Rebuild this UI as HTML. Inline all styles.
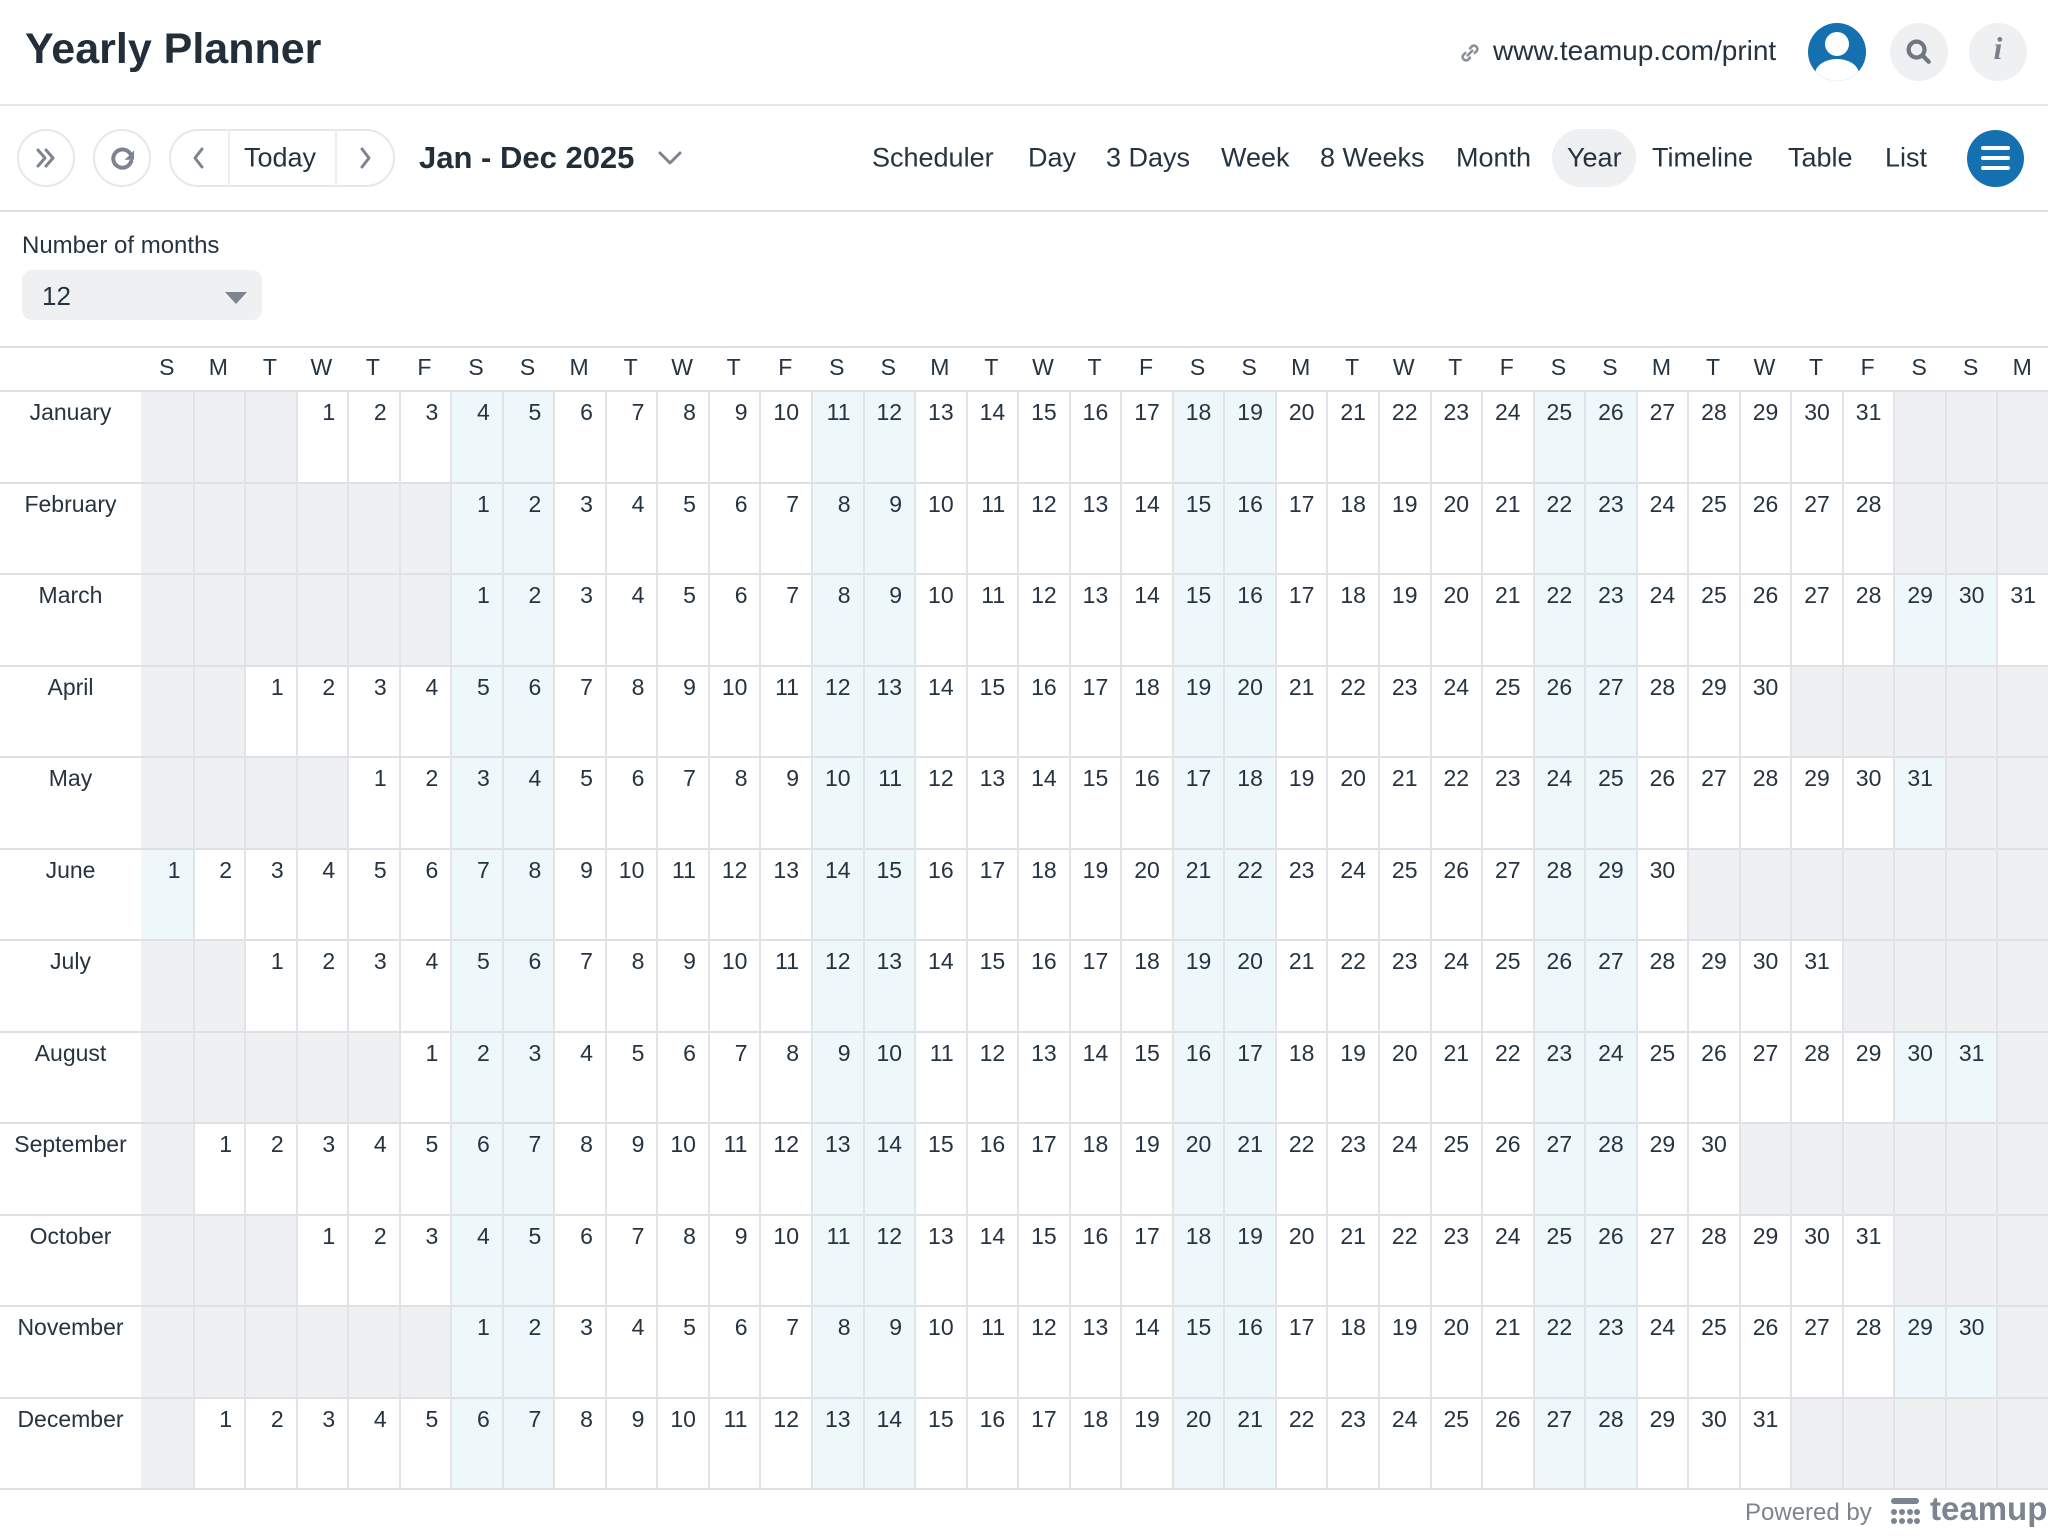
<!DOCTYPE html>
<html><head><meta charset="utf-8"><style>
*{box-sizing:border-box;margin:0;padding:0}
body{width:2048px;height:1536px;background:#fff;font-family:"Liberation Sans",sans-serif;color:#263341;position:relative;overflow:hidden}
.a{position:absolute}
.hl{position:absolute;left:0;width:2048px;height:2px;background:#e6e7ea}
.cb{position:absolute;border:2px solid #e6e7ec;border-radius:50%;width:58px;height:58px;top:129px}
.tab{position:absolute;top:158px;transform:translateY(-50%);font-size:27px;color:#263341}
.g{position:absolute;left:0;top:346px;width:2048px;display:grid;grid-template-columns:141px repeat(37,1fr);border-top:2px solid #e0e1e4}
.g>div{border-bottom:2px solid #dfe0e3;height:91.5px;font-size:23px;text-align:right;padding:7px 12px 0 0;border-left:2px solid #e2e3e6;background:#fff}
.g>div.l{border-left:none;text-align:center;padding:7px 0 0 0;font-size:23px}
.g>div.e{background:#eff0f2}
.g>div.w{background:#eef7fa}
.g>div.h{height:44px;text-align:center;padding:6px 0 0 0;border-left:none;font-size:23px;background:#fff}
.g>div.c1{border-left:none}
</style></head><body>
<div class="a" style="left:25px;top:25px;font-size:43px;font-weight:bold;color:#222f3b">Yearly Planner</div>
<svg class="a" style="left:1456px;top:39px" width="28" height="28" viewBox="0 0 24 24" fill="none" stroke="#8a919b" stroke-width="2.2" stroke-linecap="round"><path d="M10 14l4-4M8 12l-2 2a3 3 0 0 0 4 4l2-2M16 12l2-2a3 3 0 0 0-4-4l-2 2"/></svg>
<div class="a" style="left:1493px;top:35px;font-size:28px;color:#263341">www.teamup.com/print</div>
<div class="a" style="left:1808px;top:23px;width:58px;height:58px;border-radius:50%;background:#1570b0;overflow:hidden">
<div class="a" style="left:17px;top:9px;width:24px;height:24px;border-radius:50%;background:#fff"></div>
<div class="a" style="left:7px;top:36px;width:44px;height:30px;border-radius:50% 50% 0 0;background:#fff"></div></div>
<div class="a" style="left:1890px;top:23px;width:58px;height:58px;border-radius:50%;background:#eff0f2"></div>
<svg class="a" style="left:1902px;top:35px" width="34" height="34" viewBox="0 0 28 28" fill="none" stroke="#6f7782" stroke-width="3.5" stroke-linecap="round"><circle cx="12" cy="12" r="6.5"/><path d="M17 17l5 5"/></svg>
<div class="a" style="left:1969px;top:23px;width:58px;height:58px;border-radius:50%;background:#eff0f2"></div>
<div class="a" style="left:1969px;top:30px;width:58px;text-align:center;font-family:'Liberation Serif',serif;font-style:italic;font-weight:bold;font-size:32px;color:#7a818b">i</div>
<div class="hl" style="top:104px"></div>

<div class="cb" style="left:17px"></div>
<svg class="a" style="left:33px;top:145px" width="26" height="26" viewBox="0 0 26 26" fill="none" stroke="#7c8490" stroke-width="3" stroke-linecap="round" stroke-linejoin="round"><path d="M5 5l7 8-7 8M13 5l7 8-7 8"/></svg>
<div class="cb" style="left:93px"></div>
<svg class="a" style="left:106px;top:142px" width="32" height="32" viewBox="0 0 28 28" fill="none" stroke="#7c8490" stroke-width="3.5" stroke-linecap="round"><path d="M21 10A8 8 0 1 0 22 17"/><path d="M17 15h7v-7" fill="#7c8490" stroke-width="1"/></svg>
<div class="a" style="left:169px;top:129px;width:226px;height:58px;border:2px solid #e6e7ec;border-radius:29px"></div>
<div class="a" style="left:228px;top:129px;width:2px;height:58px;background:#eceef1"></div>
<div class="a" style="left:335px;top:129px;width:2px;height:58px;background:#eceef1"></div>
<svg class="a" style="left:186px;top:145px" width="26" height="26" viewBox="0 0 26 26" fill="none" stroke="#7c8490" stroke-width="3" stroke-linecap="round" stroke-linejoin="round"><path d="M16 4l-7 9 7 9"/></svg>
<svg class="a" style="left:352px;top:145px" width="26" height="26" viewBox="0 0 26 26" fill="none" stroke="#7c8490" stroke-width="3" stroke-linecap="round" stroke-linejoin="round"><path d="M10 4l7 9-7 9"/></svg>
<div class="tab" style="left:244px">Today</div>
<div class="tab" style="left:419px;font-weight:bold;font-size:31px;color:#222f3b">Jan - Dec 2025</div>
<svg class="a" style="left:656px;top:147px" width="28" height="22" viewBox="0 0 28 22" fill="none" stroke="#7c8490" stroke-width="3" stroke-linecap="round" stroke-linejoin="round"><path d="M4 6l10 10 10-10"/></svg>
<div class="tab" style="left:872px">Scheduler</div>
<div class="tab" style="left:1028px">Day</div>
<div class="tab" style="left:1106px">3 Days</div>
<div class="tab" style="left:1221px">Week</div>
<div class="tab" style="left:1320px">8 Weeks</div>
<div class="tab" style="left:1456px">Month</div>
<div class="a" style="left:1552px;top:129px;width:84px;height:58px;border-radius:29px;background:#eff0f2"></div>
<div class="tab" style="left:1567px">Year</div>
<div class="tab" style="left:1652px">Timeline</div>
<div class="tab" style="left:1788px">Table</div>
<div class="tab" style="left:1885px">List</div>
<div class="a" style="left:1967px;top:130px;width:57px;height:57px;border-radius:50%;background:#1570b0"></div>
<div class="a" style="left:1981px;top:146px;width:29px;height:4px;border-radius:2px;background:#fff"></div>
<div class="a" style="left:1981px;top:156px;width:29px;height:4px;border-radius:2px;background:#fff"></div>
<div class="a" style="left:1981px;top:166px;width:29px;height:4px;border-radius:2px;background:#fff"></div>
<div class="hl" style="top:210px;background:#e0e1e4"></div>

<div class="a" style="left:22px;top:232px;font-size:24px">Number of months</div>
<div class="a" style="left:22px;top:270px;width:240px;height:50px;border-radius:10px;background:#eff0f2"></div>
<div class="a" style="left:42px;top:281px;font-size:26px">12</div>
<div class="a" style="left:225px;top:292px;width:0;height:0;border-left:11px solid transparent;border-right:11px solid transparent;border-top:12px solid #7c8490"></div>

<div class="g">
<div class="h"></div><div class="h">S</div><div class="h">M</div><div class="h">T</div><div class="h">W</div><div class="h">T</div><div class="h">F</div><div class="h">S</div><div class="h">S</div><div class="h">M</div><div class="h">T</div><div class="h">W</div><div class="h">T</div><div class="h">F</div><div class="h">S</div><div class="h">S</div><div class="h">M</div><div class="h">T</div><div class="h">W</div><div class="h">T</div><div class="h">F</div><div class="h">S</div><div class="h">S</div><div class="h">M</div><div class="h">T</div><div class="h">W</div><div class="h">T</div><div class="h">F</div><div class="h">S</div><div class="h">S</div><div class="h">M</div><div class="h">T</div><div class="h">W</div><div class="h">T</div><div class="h">F</div><div class="h">S</div><div class="h">S</div><div class="h">M</div>

<div class="l">January</div><div class="e c1"></div><div class="e"></div><div class="e"></div><div>1</div><div>2</div><div>3</div><div class="w">4</div><div class="w">5</div><div>6</div><div>7</div><div>8</div><div>9</div><div>10</div><div class="w">11</div><div class="w">12</div><div>13</div><div>14</div><div>15</div><div>16</div><div>17</div><div class="w">18</div><div class="w">19</div><div>20</div><div>21</div><div>22</div><div>23</div><div>24</div><div class="w">25</div><div class="w">26</div><div>27</div><div>28</div><div>29</div><div>30</div><div>31</div><div class="e"></div><div class="e"></div><div class="e"></div>

<div class="l">February</div><div class="e c1"></div><div class="e"></div><div class="e"></div><div class="e"></div><div class="e"></div><div class="e"></div><div class="w">1</div><div class="w">2</div><div>3</div><div>4</div><div>5</div><div>6</div><div>7</div><div class="w">8</div><div class="w">9</div><div>10</div><div>11</div><div>12</div><div>13</div><div>14</div><div class="w">15</div><div class="w">16</div><div>17</div><div>18</div><div>19</div><div>20</div><div>21</div><div class="w">22</div><div class="w">23</div><div>24</div><div>25</div><div>26</div><div>27</div><div>28</div><div class="e"></div><div class="e"></div><div class="e"></div>

<div class="l">March</div><div class="e c1"></div><div class="e"></div><div class="e"></div><div class="e"></div><div class="e"></div><div class="e"></div><div class="w">1</div><div class="w">2</div><div>3</div><div>4</div><div>5</div><div>6</div><div>7</div><div class="w">8</div><div class="w">9</div><div>10</div><div>11</div><div>12</div><div>13</div><div>14</div><div class="w">15</div><div class="w">16</div><div>17</div><div>18</div><div>19</div><div>20</div><div>21</div><div class="w">22</div><div class="w">23</div><div>24</div><div>25</div><div>26</div><div>27</div><div>28</div><div class="w">29</div><div class="w">30</div><div>31</div>

<div class="l">April</div><div class="e c1"></div><div class="e"></div><div>1</div><div>2</div><div>3</div><div>4</div><div class="w">5</div><div class="w">6</div><div>7</div><div>8</div><div>9</div><div>10</div><div>11</div><div class="w">12</div><div class="w">13</div><div>14</div><div>15</div><div>16</div><div>17</div><div>18</div><div class="w">19</div><div class="w">20</div><div>21</div><div>22</div><div>23</div><div>24</div><div>25</div><div class="w">26</div><div class="w">27</div><div>28</div><div>29</div><div>30</div><div class="e"></div><div class="e"></div><div class="e"></div><div class="e"></div><div class="e"></div>

<div class="l">May</div><div class="e c1"></div><div class="e"></div><div class="e"></div><div class="e"></div><div>1</div><div>2</div><div class="w">3</div><div class="w">4</div><div>5</div><div>6</div><div>7</div><div>8</div><div>9</div><div class="w">10</div><div class="w">11</div><div>12</div><div>13</div><div>14</div><div>15</div><div>16</div><div class="w">17</div><div class="w">18</div><div>19</div><div>20</div><div>21</div><div>22</div><div>23</div><div class="w">24</div><div class="w">25</div><div>26</div><div>27</div><div>28</div><div>29</div><div>30</div><div class="w">31</div><div class="e"></div><div class="e"></div>

<div class="l">June</div><div class="w c1">1</div><div>2</div><div>3</div><div>4</div><div>5</div><div>6</div><div class="w">7</div><div class="w">8</div><div>9</div><div>10</div><div>11</div><div>12</div><div>13</div><div class="w">14</div><div class="w">15</div><div>16</div><div>17</div><div>18</div><div>19</div><div>20</div><div class="w">21</div><div class="w">22</div><div>23</div><div>24</div><div>25</div><div>26</div><div>27</div><div class="w">28</div><div class="w">29</div><div>30</div><div class="e"></div><div class="e"></div><div class="e"></div><div class="e"></div><div class="e"></div><div class="e"></div><div class="e"></div>

<div class="l">July</div><div class="e c1"></div><div class="e"></div><div>1</div><div>2</div><div>3</div><div>4</div><div class="w">5</div><div class="w">6</div><div>7</div><div>8</div><div>9</div><div>10</div><div>11</div><div class="w">12</div><div class="w">13</div><div>14</div><div>15</div><div>16</div><div>17</div><div>18</div><div class="w">19</div><div class="w">20</div><div>21</div><div>22</div><div>23</div><div>24</div><div>25</div><div class="w">26</div><div class="w">27</div><div>28</div><div>29</div><div>30</div><div>31</div><div class="e"></div><div class="e"></div><div class="e"></div><div class="e"></div>

<div class="l">August</div><div class="e c1"></div><div class="e"></div><div class="e"></div><div class="e"></div><div class="e"></div><div>1</div><div class="w">2</div><div class="w">3</div><div>4</div><div>5</div><div>6</div><div>7</div><div>8</div><div class="w">9</div><div class="w">10</div><div>11</div><div>12</div><div>13</div><div>14</div><div>15</div><div class="w">16</div><div class="w">17</div><div>18</div><div>19</div><div>20</div><div>21</div><div>22</div><div class="w">23</div><div class="w">24</div><div>25</div><div>26</div><div>27</div><div>28</div><div>29</div><div class="w">30</div><div class="w">31</div><div class="e"></div>

<div class="l">September</div><div class="e c1"></div><div>1</div><div>2</div><div>3</div><div>4</div><div>5</div><div class="w">6</div><div class="w">7</div><div>8</div><div>9</div><div>10</div><div>11</div><div>12</div><div class="w">13</div><div class="w">14</div><div>15</div><div>16</div><div>17</div><div>18</div><div>19</div><div class="w">20</div><div class="w">21</div><div>22</div><div>23</div><div>24</div><div>25</div><div>26</div><div class="w">27</div><div class="w">28</div><div>29</div><div>30</div><div class="e"></div><div class="e"></div><div class="e"></div><div class="e"></div><div class="e"></div><div class="e"></div>

<div class="l">October</div><div class="e c1"></div><div class="e"></div><div class="e"></div><div>1</div><div>2</div><div>3</div><div class="w">4</div><div class="w">5</div><div>6</div><div>7</div><div>8</div><div>9</div><div>10</div><div class="w">11</div><div class="w">12</div><div>13</div><div>14</div><div>15</div><div>16</div><div>17</div><div class="w">18</div><div class="w">19</div><div>20</div><div>21</div><div>22</div><div>23</div><div>24</div><div class="w">25</div><div class="w">26</div><div>27</div><div>28</div><div>29</div><div>30</div><div>31</div><div class="e"></div><div class="e"></div><div class="e"></div>

<div class="l">November</div><div class="e c1"></div><div class="e"></div><div class="e"></div><div class="e"></div><div class="e"></div><div class="e"></div><div class="w">1</div><div class="w">2</div><div>3</div><div>4</div><div>5</div><div>6</div><div>7</div><div class="w">8</div><div class="w">9</div><div>10</div><div>11</div><div>12</div><div>13</div><div>14</div><div class="w">15</div><div class="w">16</div><div>17</div><div>18</div><div>19</div><div>20</div><div>21</div><div class="w">22</div><div class="w">23</div><div>24</div><div>25</div><div>26</div><div>27</div><div>28</div><div class="w">29</div><div class="w">30</div><div class="e"></div>

<div class="l">December</div><div class="e c1"></div><div>1</div><div>2</div><div>3</div><div>4</div><div>5</div><div class="w">6</div><div class="w">7</div><div>8</div><div>9</div><div>10</div><div>11</div><div>12</div><div class="w">13</div><div class="w">14</div><div>15</div><div>16</div><div>17</div><div>18</div><div>19</div><div class="w">20</div><div class="w">21</div><div>22</div><div>23</div><div>24</div><div>25</div><div>26</div><div class="w">27</div><div class="w">28</div><div>29</div><div>30</div><div>31</div><div class="e"></div><div class="e"></div><div class="e"></div><div class="e"></div><div class="e"></div>
</div>

<div class="a" style="left:1745px;top:1499px;font-size:24px;color:#7c8490">Powered by</div>
<svg class="a" style="left:1890px;top:1497px" width="30" height="30" viewBox="0 0 30 30" fill="#7c8490"><rect x="1" y="1" width="28" height="6" rx="3"/><circle cx="4" cy="15" r="3"/><circle cx="12" cy="15" r="3"/><circle cx="20" cy="15" r="3"/><circle cx="27" cy="15" r="3"/><circle cx="4" cy="24" r="3"/><circle cx="12" cy="24" r="3"/><circle cx="20" cy="24" r="3"/><circle cx="27" cy="24" r="3"/></svg>
<div class="a" style="left:1930px;top:1490px;font-size:33px;font-weight:bold;color:#7c8490">teamup</div>
</body></html>
